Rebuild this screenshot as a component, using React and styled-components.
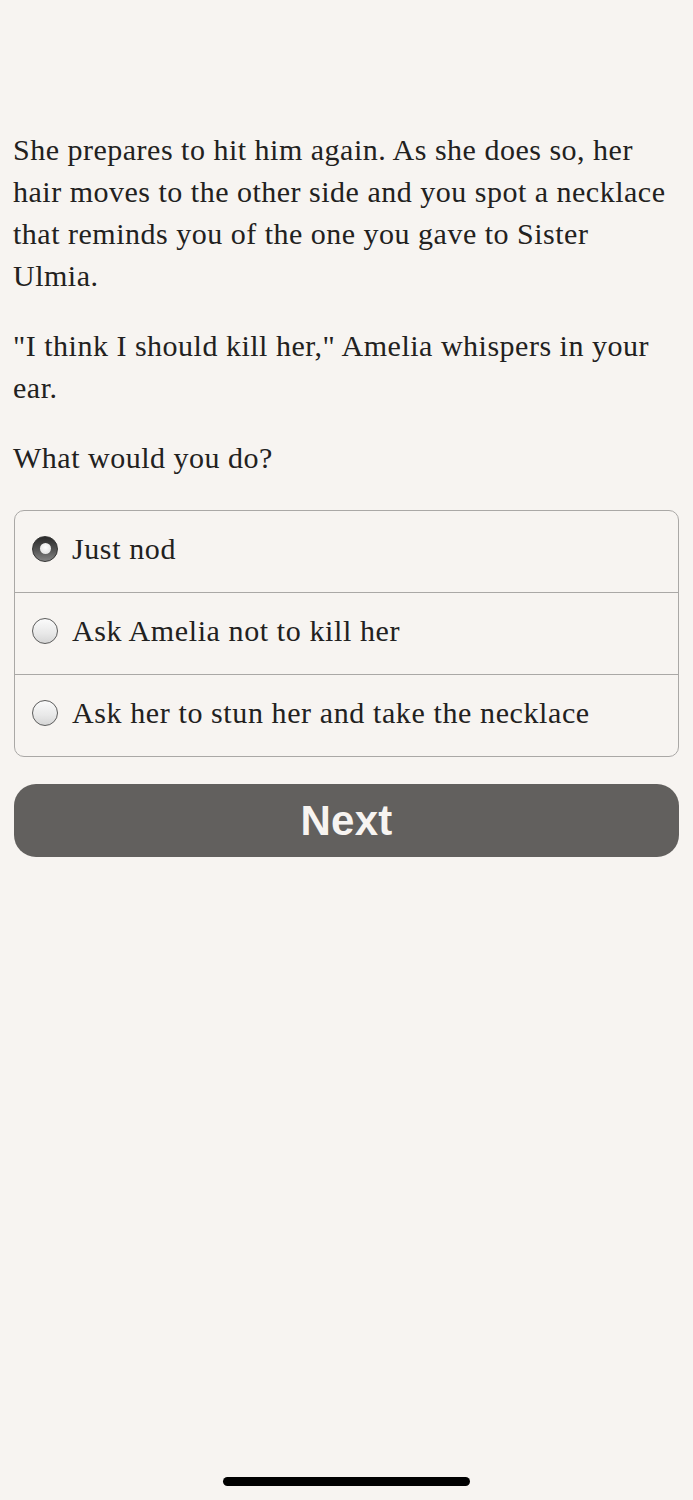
import React, { useState } from "react";
import styled, { createGlobalStyle } from "styled-components";

const Global = createGlobalStyle`
  html, body { margin: 0; padding: 0; background: #f7f4f1; }
  body { font-family: "Liberation Serif", serif; }
`;

const Page = styled.div`
  min-height: 1500px;
  box-sizing: border-box;
  padding: 129px 14px 0 13px;
  display: flex;
  flex-direction: column;
  background: #f7f4f1;
  position: relative;
`;

const Para = styled.p`
  margin: 0 6px 28px 0;
  font-family: "Liberation Serif", serif;
  font-size: 30px;
  line-height: 42px;
  letter-spacing: 0.5px;
  color: #222120;
`;

const Options = styled.div`
  margin-top: 3px;
  margin-left: 1px;
  border: 1.5px solid #aaa8a6;
  border-radius: 10px;
  display: flex;
  flex-direction: column;
  overflow: hidden;
`;

const Row = styled.label`
  height: 75px;
  padding: 0 0 6px 17px;
  display: flex;
  align-items: center;
  gap: 14px;
  cursor: pointer;
  font-family: "Liberation Serif", serif;
  font-size: 30px;
  letter-spacing: 0.6px;
  color: #222120;
  & + & { border-top: 1.5px solid #aaa8a6; }
`;

const Radio = styled.span`
  width: 26px;
  height: 26px;
  border-radius: 50%;
  box-sizing: border-box;
  flex: none;
  display: flex;
  align-items: center;
  justify-content: center;
  border: 1.5px solid ${(p) => (p.$on ? "#333" : "#5c5c5c")};
  background: ${(p) =>
    p.$on
      ? "linear-gradient(180deg, #2a2a2a 0%, #555 55%, #858585 100%)"
      : "linear-gradient(180deg, #fbfbfb 0%, #e8e8e8 60%, #d6d6d6 100%)"};
  &::after {
    content: "";
    display: ${(p) => (p.$on ? "block" : "none")};
    width: 11px;
    height: 11px;
    border-radius: 50%;
    background: radial-gradient(circle at 50% 40%, #ffffff 0%, #e6e6e6 70%, #bdbdbd 100%);
  }
`;

const NextButton = styled.button`
  margin-top: 27px;
  margin-left: 1px;
  height: 73px;
  border: none;
  border-radius: 22px;
  background: #62605e;
  color: #f7f4f1;
  font-family: "Liberation Sans", Arial, sans-serif;
  font-weight: bold;
  font-size: 42px;
  letter-spacing: 0.3px;
  cursor: pointer;
`;

const HomeBar = styled.div`
  position: absolute;
  left: 223px;
  top: 1477px;
  width: 247px;
  height: 9px;
  border-radius: 5px;
  background: #000;
`;

const choices = [
  "Just nod",
  "Ask Amelia not to kill her",
  "Ask her to stun her and take the necklace",
];

export default function App() {
  const [sel, setSel] = useState(0);
  return (
    <Page>
      <Global />
      <Para>
        She prepares to hit him again. As she does so, her hair moves to the
        other side and you spot a necklace that reminds you of the one you gave
        to Sister Ulmia.
      </Para>
      <Para>"I think I should kill her," Amelia whispers in your ear.</Para>
      <Para>What would you do?</Para>
      <Options>
        {choices.map((c, i) => (
          <Row key={c} onClick={() => setSel(i)}>
            <Radio $on={sel === i} />
            {c}
          </Row>
        ))}
      </Options>
      <NextButton>Next</NextButton>
      <HomeBar />
    </Page>
  );
}
